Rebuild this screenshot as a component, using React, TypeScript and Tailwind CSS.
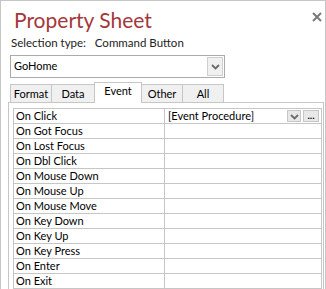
import React from "react";

const rows = [
  "On Click",
  "On Got Focus",
  "On Lost Focus",
  "On Dbl Click",
  "On Mouse Down",
  "On Mouse Up",
  "On Mouse Move",
  "On Key Down",
  "On Key Up",
  "On Key Press",
  "On Enter",
  "On Exit",
];

function Chevron({ className = "" }: { className?: string }) {
  return (
    <svg width="9" height="6" viewBox="0 0 9 6" className={className}>
      <path d="M1 1 L4.5 4.5 L8 1" fill="none" stroke="#6a6a6a" strokeWidth="1.8" />
    </svg>
  );
}

export default function App() {
  const tabs = [
    { label: "Format", w: "w-[42px]" },
    { label: "Data", w: "w-[44px]" },
    { label: "Event", w: "w-[48px]", active: true },
    { label: "Other", w: "w-[42px]" },
    { label: "All", w: "w-[42px]" },
  ];
  return (
    <div
      className="w-[326px] h-[289px] overflow-hidden bg-white border-l border-t border-r border-[#c6c6c6] flex flex-col text-[11px] text-black"
      style={{ fontFamily: 'Lato, "Liberation Sans", Arial, sans-serif' }}
    >
      <div className="h-[34px] flex justify-between items-start">
        <div className="ml-[13px] mt-[5px] text-[21px] leading-[28px] text-[#a4373a]">
          Property Sheet
        </div>
        <svg width="10" height="10" viewBox="0 0 10 10" className="mt-[11px] mr-[3px]">
          <path d="M1 1 L9 9 M9 1 L1 9" stroke="#7a7a7a" strokeWidth="2" />
        </svg>
      </div>
      <div className="h-[16px] pl-[10px] leading-[16px] text-[11.5px] text-[#222]">
        Selection type:&nbsp;&nbsp; Command Button
      </div>
      <div className="mt-[4px] ml-[9px] w-[215px] h-[23px] border border-[#ababab] flex items-stretch">
        <div className="flex-1 pl-[3px] leading-[20px]">GoHome</div>
        <div className="m-px w-[16px] border border-[#cfcfcf] bg-[#f0f0f0] flex items-center justify-center">
          <Chevron />
        </div>
      </div>
      <div className="mt-[4px] ml-[9px] h-[20px] flex items-end">
        {tabs.map((t, i) => (
          <div
            key={t.label}
            className={
              (i === 0 ? "" : "-ml-px ") +
              t.w +
              " border border-b-0 border-[#c6c6c6] flex items-center justify-center " +
              (t.active
                ? "relative z-10 h-[21px] -mb-px bg-white pb-[3px]"
                : "h-[18px] bg-[#f0f0f0] pt-[1px]")
            }
          >
            {t.label}
          </div>
        ))}
      </div>
      <div className="ml-[7px] w-[316px] flex-1 border border-b-0 border-[#c6c6c6] pt-[5px] pl-[4px]">
        <div className="w-[309px] border-l border-t border-r border-[#c6c6c6]">
          {rows.map((r, i) => (
            <div key={r} className="h-[15px] border-b border-[#c6c6c6] flex">
              <div className="w-[151px] border-r border-[#c6c6c6] pl-[2px] leading-[14px] whitespace-nowrap">
                {r}
              </div>
              <div className="flex-1 flex items-stretch">
                {i === 0 && (
                  <>
                    <div className="flex-1 pl-[3px] leading-[14px] whitespace-nowrap">
                      [Event Procedure]
                    </div>
                    <div className="my-px w-[14px] border border-[#c6c6c6] bg-[#e8e8e8] flex items-end justify-center pb-[1px]">
                      <Chevron />
                    </div>
                    <div className="my-px ml-[2px] mr-[2px] w-[16px] border border-[#c6c6c6] bg-[#e8e8e8] flex items-center justify-center text-[10px] font-bold leading-none pb-[3px]">
                      ...
                    </div>
                  </>
                )}
              </div>
            </div>
          ))}
        </div>
      </div>
    </div>
  );
}
